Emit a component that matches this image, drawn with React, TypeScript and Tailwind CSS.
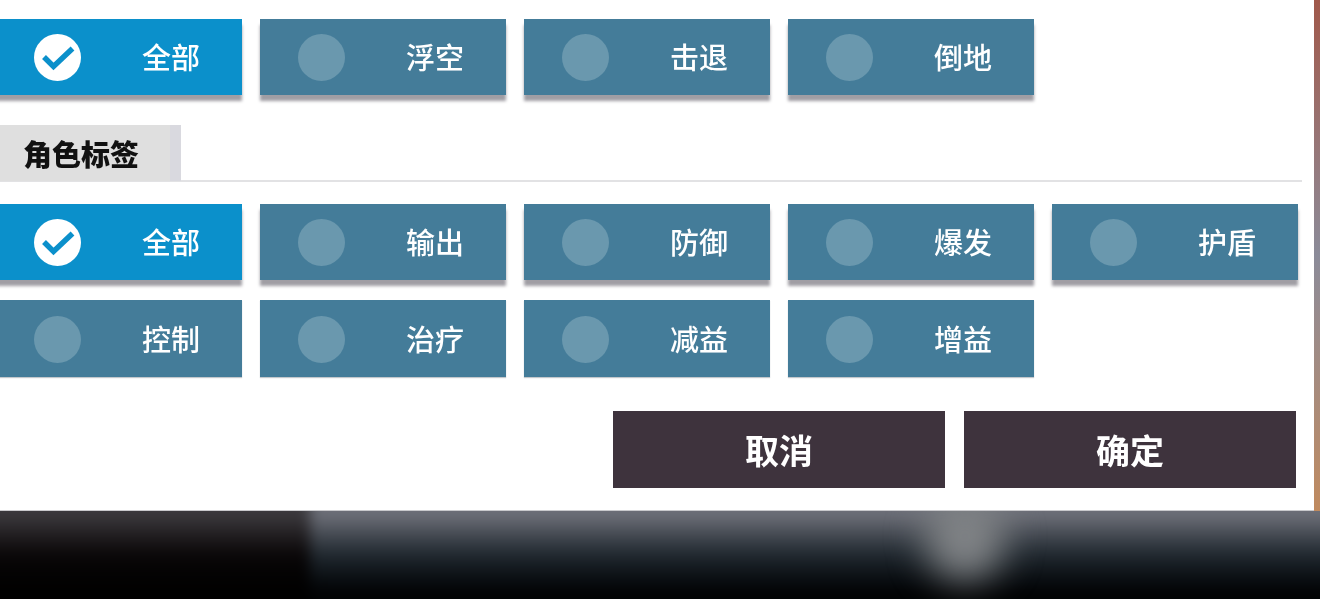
const CJK = "font-['Noto_Sans_CJK_SC','Noto_Sans',sans-serif]";

function CheckCircle() {
    return (
        <svg viewBox="0 0 47 47" className="w-[47px] h-[47px] shrink-0">
            <circle cx="23.5" cy="23.5" r="23.5" fill="#ffffff" />
            <path d="M10 23l9.5 9.5L38.5 14.5" fill="none" stroke="#0b90cb" strokeWidth="5.5" />
        </svg>
    );
}

function TagButton({ label, active, flat }: { label: string; active?: boolean; flat?: boolean }) {
    return (
        <div
            className={`w-[246px] flex items-center pl-[38px] ${active ? "bg-[#0b90cb]" : "bg-[#447c99]"} ${flat ? "h-[77px] pt-[2px] shadow-[0_1px_1px_#c4c8cc]" : "h-[76px] shadow-[0_6px_3px_#a09ea4]"}`}
        >
            {active ? <CheckCircle /> : <div className="w-[47px] h-[47px] shrink-0 rounded-full bg-[#6a98ae]" />}
            <span className={`ml-[61px] pb-[2px] text-[29px] leading-none font-medium text-white whitespace-nowrap ${CJK}`}>{label}</span>
        </div>
    );
}

function TagRow({ labels, flat }: { labels: string[]; flat?: boolean }) {
    return (
        <div className="flex gap-[18px] -ml-[4px]">
            {labels.map((label, i) => (
                <TagButton key={label} label={label} active={label === "全部" && i === 0} flat={flat} />
            ))}
        </div>
    );
}

function FooterButton({ label }: { label: string }) {
    return (
        <button className={`w-[332px] h-[77px] bg-[#3e333d] text-white text-[34px] font-bold leading-none ${CJK}`}>
            {label}
        </button>
    );
}

export default function App() {
    return (
        <div className="w-[1320px] h-[599px] overflow-hidden flex flex-col bg-black">
            <div className="flex h-[511px] shrink-0">
                {/* Filter panel */}
                <div className="w-[1314px] bg-white pt-[19px] border-b border-[#c9c9cc] overflow-hidden">
                    <div className="blur-[0.4px]">
                        <TagRow labels={["全部", "浮空", "击退", "倒地"]} />

                        <div className="mt-[30px] mr-[12px] h-[57px] border-b-2 border-[#e2e2e4]">
                            <div className="w-[181px] h-[56px] flex bg-[#dfdfdf]">
                                <span className={`w-[170px] pl-[23px] leading-[56px] text-[29px] font-black text-[#111111] whitespace-nowrap ${CJK}`}>
                                    角色标签
                                </span>
                                <div className="w-[11px] bg-[#d9d9df]" />
                            </div>
                        </div>

                        <div className="mt-[22px] flex flex-col gap-[20px]">
                            <TagRow labels={["全部", "输出", "防御", "爆发", "护盾"]} />
                            <TagRow labels={["控制", "治疗", "减益", "增益"]} flat />
                        </div>

                        <div className="mt-[34px] mr-[18px] flex justify-end gap-[19px]">
                            <FooterButton label="取消" />
                            <FooterButton label="确定" />
                        </div>
                    </div>
                </div>
                <div className="flex-1 bg-gradient-to-b from-[#a0584a] via-[#8b8b99] to-[#c08a5e]" />
            </div>

            {/* Blurred game backdrop */}
            <div className="relative flex-1 overflow-hidden">
                <div className="absolute -inset-[20px] flex blur-[7px]">
                    <div className="w-[330px] bg-gradient-to-b from-[#3c3a3e] from-[18%] via-[#0a0708] via-50% to-black" />
                    <div className="flex-1 bg-gradient-to-b from-[#6e7079] from-[18%] via-[#20282f] via-50% to-[#020304] to-80%" />
                </div>
                <div className="absolute left-[925px] -top-[20px] w-[80px] h-[90px] rounded-full bg-[#7f8285] blur-[18px]" />
            </div>
        </div>
    );
}
